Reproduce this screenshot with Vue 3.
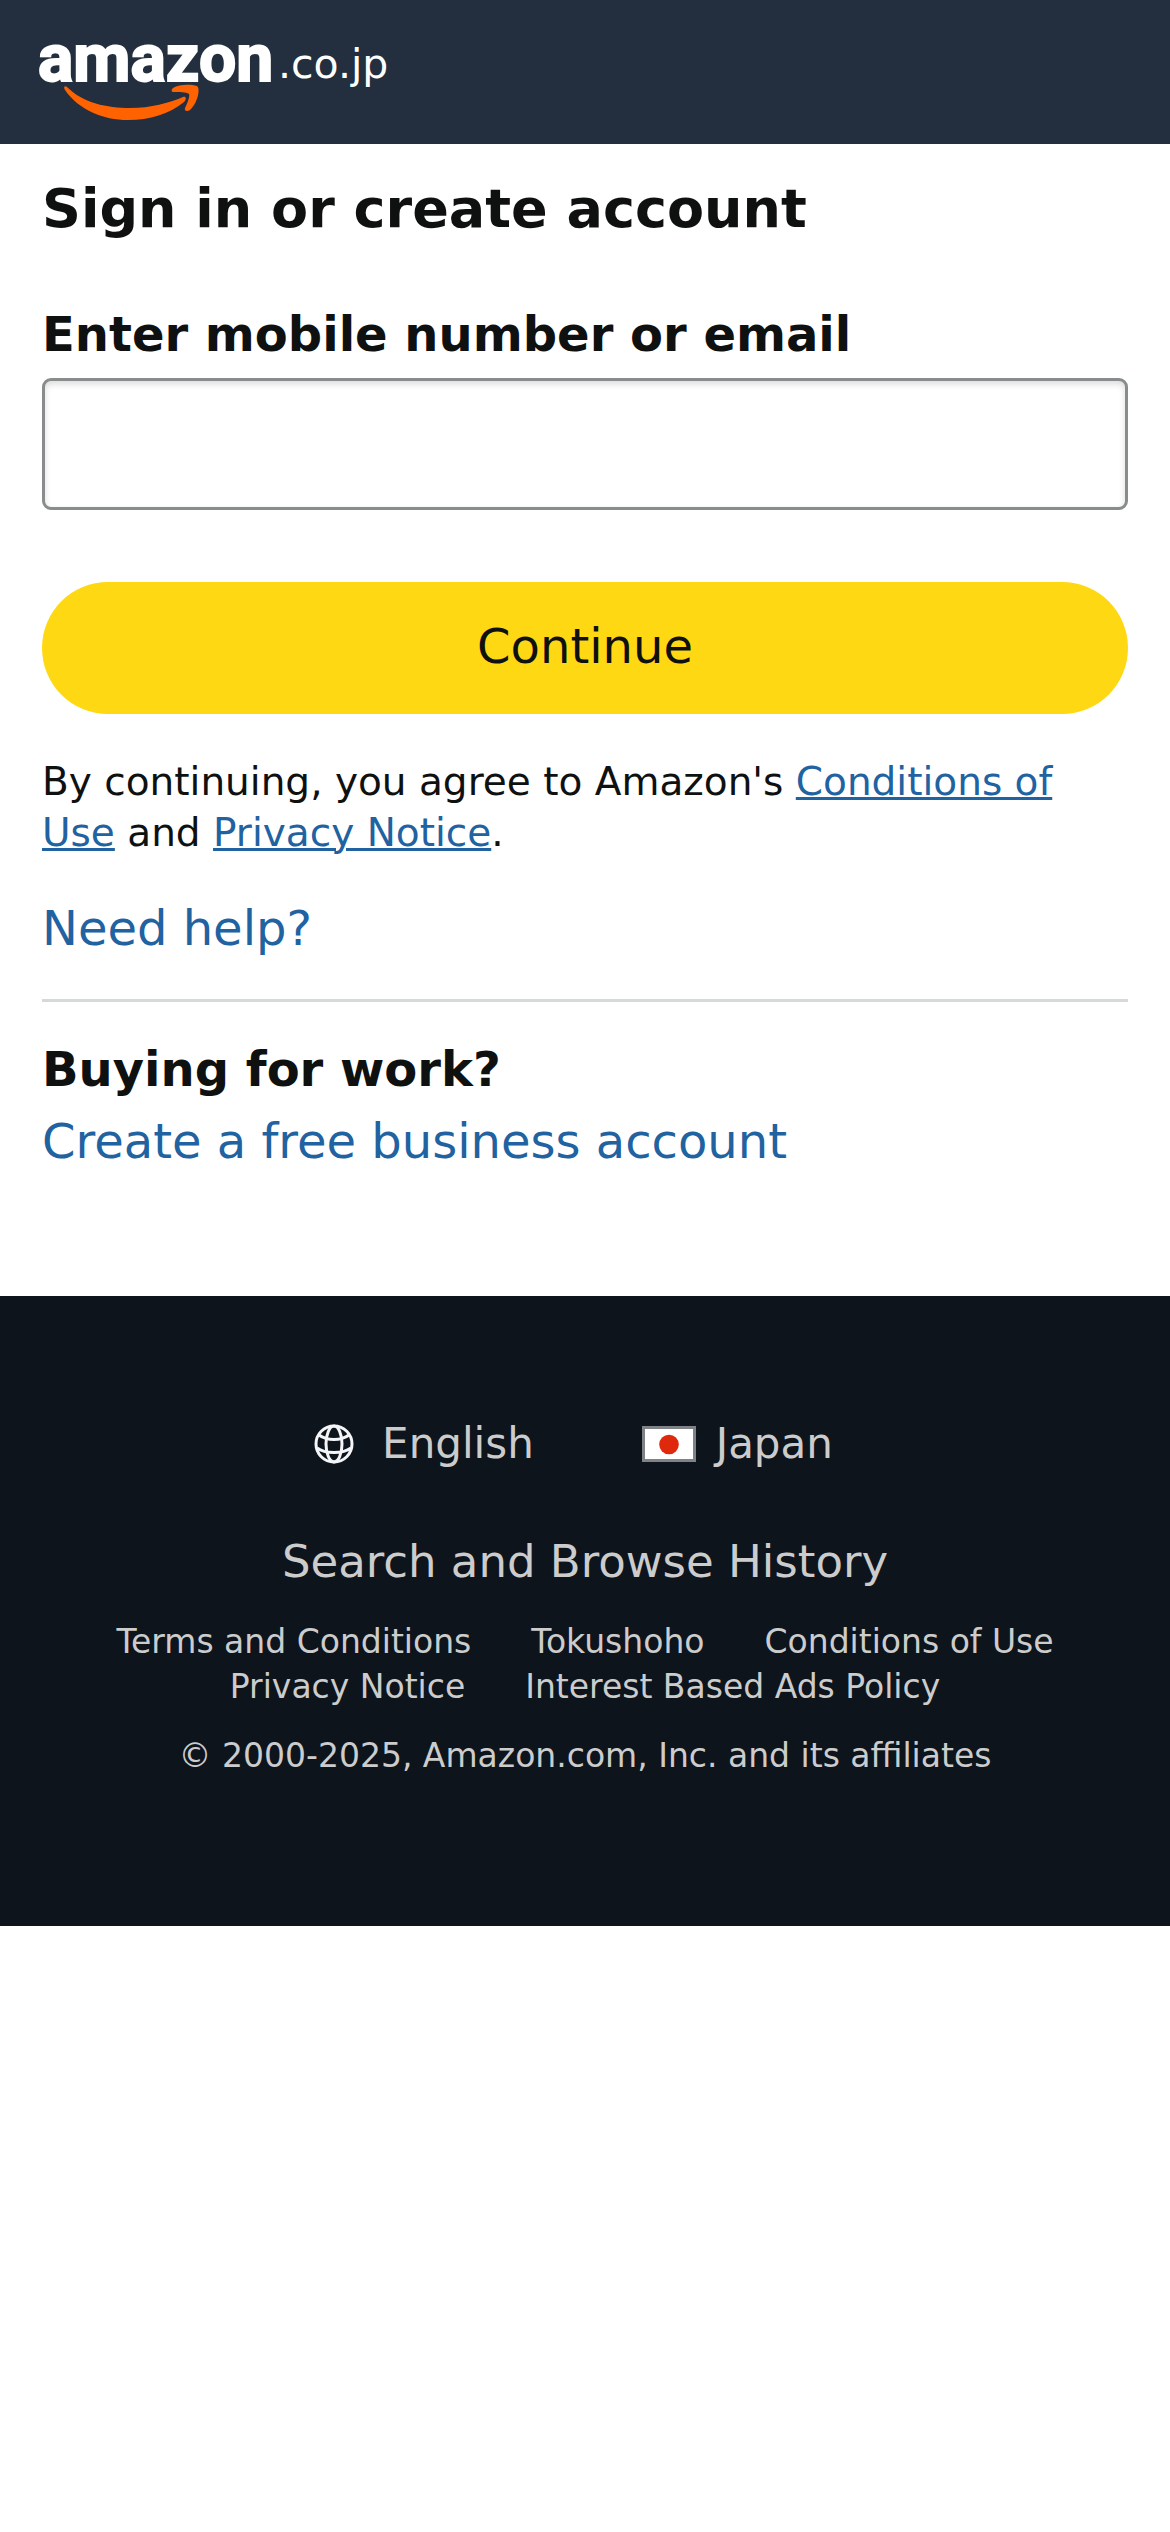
<script setup>
import { ref } from 'vue'

const account = ref('')
const footerLinks = [
  'Terms and Conditions',
  'Tokushoho',
  'Conditions of Use',
  'Privacy Notice',
  'Interest Based Ads Policy',
]
</script>

<template>
  <div class="page">
    <header class="header">
      <a class="brand" href="#" aria-label="amazon.co.jp">
        <svg class="logo" width="242" height="90" viewBox="0 0 242 90">
          <text class="wordmark" x="2" y="47">amazon</text>
          <path class="smile" d="M31 53 C47 69 71 74 94 74 C115 74 133 69 147 63 C150 62 151 65 148 68 C133 80 114 86 92 86 C67 86 43 76 29 56 C27 53 29 51 31 53 Z" />
          <path class="smile" d="M137 54 C143 50 155 50 161 52 C165 55 161 70 154 76 C151 78 148 77 149 74 C152 68 154 62 153 60 C150 58 143 58 138 58 C135 58 135 56 137 54 Z" />
        </svg>
        <span class="domain">.co.jp</span>
      </a>
    </header>

    <main class="main">
      <h1 class="title">Sign in or create account</h1>
      <form @submit.prevent>
        <label class="label" for="account">Enter mobile number or email</label>
        <input id="account" v-model="account" class="field" type="text" />
        <button class="continue" type="submit">Continue</button>
      </form>
      <p class="legal">
        By continuing, you agree to Amazon's <a href="#">Conditions of Use</a> and <a href="#">Privacy Notice</a>.
      </p>
      <a class="link help" href="#">Need help?</a>
      <hr class="divider" />
      <h2 class="subtitle">Buying for work?</h2>
      <a class="link" href="#">Create a free business account</a>
    </main>

    <footer class="footer">
      <div class="locale">
        <a class="choice language" href="#">
          <svg width="40" height="40" viewBox="0 0 40 40" fill="none" stroke="#f3f5f8" stroke-width="3">
            <circle cx="20" cy="20" r="18" />
            <ellipse cx="20" cy="20" rx="8" ry="18" />
            <path d="M5 11 C13 17 27 17 35 11 M3 24 C11 30 29 30 37 24" />
          </svg>
          English
        </a>
        <a class="choice country" href="#">
          <svg width="54" height="36" viewBox="0 0 54 36">
            <rect width="54" height="36" fill="#7f8286" />
            <rect x="3" y="3" width="48" height="30" fill="#fff" />
            <circle cx="27" cy="18.5" r="9.8" fill="#df290d" />
          </svg>
          Japan
        </a>
      </div>
      <a class="history" href="#">Search and Browse History</a>
      <nav class="links">
        <a v-for="name in footerLinks" :key="name" href="#">{{ name }}</a>
      </nav>
      <p class="copyright">© 2000-2025, Amazon.com, Inc. and its affiliates</p>
    </footer>
  </div>
</template>

<style>
body {
  margin: 0;
  background: #fff;
}
</style>

<style scoped>
.page {
  font-family: "DejaVu Sans", sans-serif;
  color: #0f1111;
}
.header {
  display: flex;
  height: 144px;
  padding: 0 36px;
  background: #232f3e;
}
.brand {
  display: flex;
  align-items: flex-start;
  padding-top: 34px;
  color: #fff;
  text-decoration: none;
}
.logo {
  overflow: visible;
}
.wordmark {
  font-family: Roboto, "Liberation Sans", sans-serif;
  font-size: 66px;
  font-weight: 700;
  fill: #fff;
  stroke: #fff;
  stroke-width: 2px;
}
.smile {
  fill: #ff6200;
}
.domain {
  font-size: 41px;
  line-height: 60px;
}
.main {
  padding: 30px 42px 119px;
}
.title {
  margin: 0 0 54px;
  font-size: 54px;
  line-height: 70px;
}
.label {
  display: block;
  margin-bottom: 8px;
  font-size: 48px;
  font-weight: 700;
  line-height: 72px;
}
.field {
  display: block;
  box-sizing: border-box;
  width: 100%;
  height: 132px;
  padding: 0 24px;
  border: 3px solid #888c8c;
  border-radius: 9px;
  outline: none;
  background: #fff;
  box-shadow: inset 0 3px 6px rgba(15, 17, 17, 0.15);
  font: 48px "DejaVu Sans", sans-serif;
}
.continue {
  display: block;
  width: 100%;
  height: 132px;
  margin-top: 72px;
  padding: 0 0 4px;
  border: 0;
  border-radius: 66px;
  background: #ffd814;
  color: #0f1111;
  font: 48px "DejaVu Sans", sans-serif;
}
.legal {
  margin: 42px 0 34px;
  font-size: 39px;
  line-height: 51px;
}
.legal a {
  text-decoration-thickness: 3px;
}
.legal a,
.link {
  color: #2162a1;
}
.link {
  display: block;
  font-size: 48px;
  line-height: 72px;
  text-decoration: none;
}
.divider {
  height: 3px;
  margin: 35px 0 31px;
  border: 0;
  background: #d5d9d9;
}
.subtitle {
  margin: 0;
  font-size: 48px;
  line-height: 72px;
}
.footer {
  padding: 118px 42px 148px;
  background: #0d141c;
  color: #ccc;
  text-align: center;
}
.footer a {
  color: inherit;
  text-decoration: none;
}
.locale {
  display: flex;
  justify-content: center;
  gap: 108px;
  padding-right: 23px;
}
.choice {
  display: flex;
  align-items: center;
  font-size: 42px;
  line-height: 60px;
}
.language {
  gap: 28px;
}
.country {
  gap: 20px;
}
.history {
  display: block;
  margin-top: 58px;
  font-size: 45px;
  line-height: 60px;
}
.links {
  display: flex;
  flex-wrap: wrap;
  justify-content: center;
  column-gap: 60px;
  margin-top: 27px;
  font-size: 33px;
  line-height: 45px;
}
.copyright {
  margin: 24px 0 0;
  font-size: 33px;
  line-height: 45px;
}
</style>
